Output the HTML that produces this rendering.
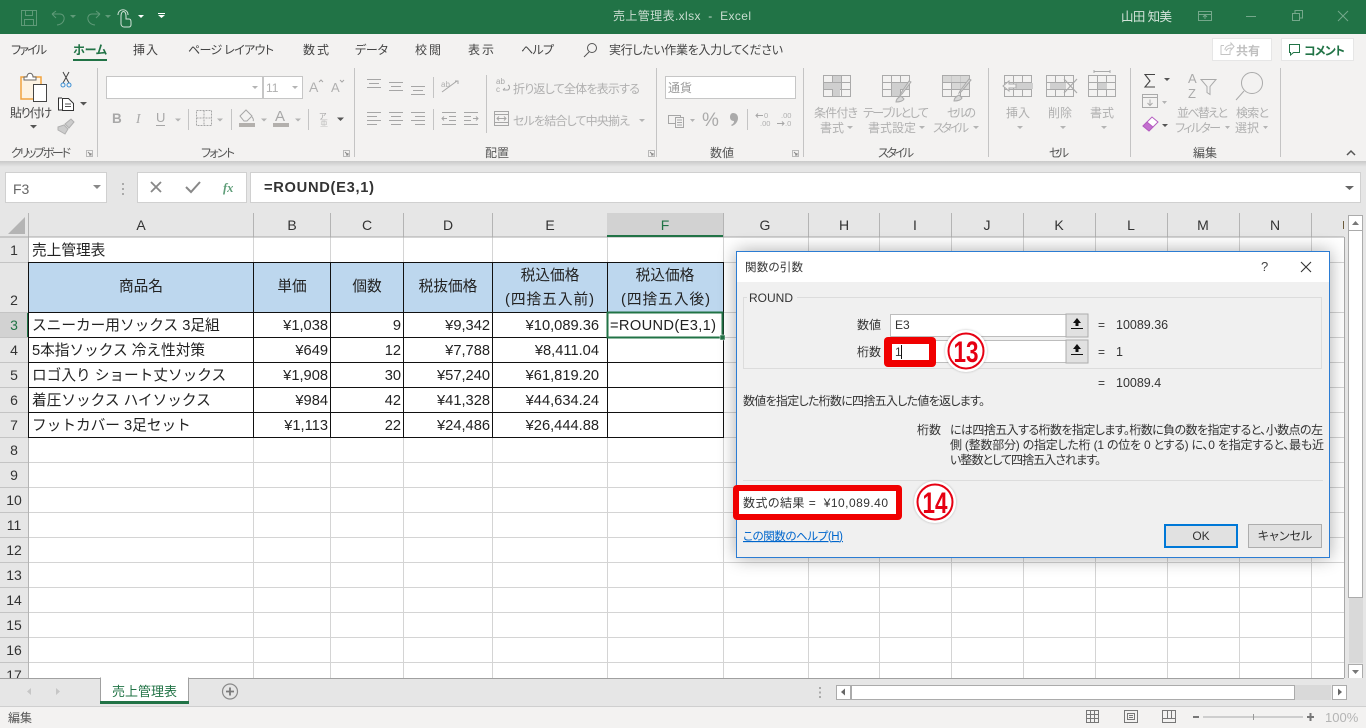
<!DOCTYPE html>
<html lang="ja"><head><meta charset="utf-8"><title>売上管理表.xlsx - Excel</title>
<style>
html,body{margin:0;padding:0;width:1366px;height:728px;overflow:hidden;background:#e6e6e6}
svg{display:block}
text{font-family:"Liberation Sans","Noto Sans CJK JP",sans-serif;fill:#333;white-space:pre}
.t{font-size:12px;fill:#444;font-feature-settings:"palt"}
.d{font-size:12px;fill:#b0b0b0;font-feature-settings:"palt"}
.c{font-size:14.67px;fill:#222}
.e{text-anchor:end}
.m{text-anchor:middle}
.h{font-size:14px;fill:#333;text-anchor:middle}
.g{font-size:12px;fill:#555;font-feature-settings:"palt"}
.dl{font-size:12px;fill:#333;font-feature-settings:"palt"}
.ic{fill:none;stroke:#a6a6a6;stroke-width:1}
.ar{fill:#b4b4b4}
.ad{fill:#555}
</style></head><body>
<svg width="1366" height="728" viewBox="0 0 1366 728" xmlns="http://www.w3.org/2000/svg">
<defs>
<linearGradient id="sh" x1="0" y1="0" x2="0" y2="1"><stop offset="0" stop-color="#c9c9c9"/><stop offset="1" stop-color="#e6e6e6"/></linearGradient>
<filter id="ds" x="-10%" y="-15%" width="120%" height="130%"><feGaussianBlur stdDeviation="9"/></filter>
<filter id="cs" x="-30%" y="-30%" width="160%" height="160%"><feGaussianBlur stdDeviation="1.2"/></filter>
</defs>
<rect width="1366" height="728" fill="#e6e6e6"/>

<!-- title bar -->
<rect width="1366" height="34" fill="#217346"/>
<g fill="none" stroke="#5f9a78" stroke-width="1">
<path d="M21.5 10.5h15v15h-15zM25.5 10.5v5h7v-5M24.5 25.5v-6h9v6"/>
<path d="M52 14l4-3M52 14l4 4M52 14h8c6 0 6 10-3 11"/>
<path d="M100 14l-4-3M100 14l-4 4M100 14h-8c-6 0-6 10 3 11"/>
</g>
<path d="M70 15h6l-3 3zM105 15h6l-3 3z" fill="#5f9a78"/>
<path d="M121 24v-8c0-6 5-6 5 0v3h3c2 0 2 2 2 3v3c0 1-1 2-2 2h-5c-2 0-3-2-3-3zM118 15c0-7 10-7 10 0" fill="none" stroke="#d3e3d9" stroke-width="1"/>
<path d="M138 15h6l-3 3z" fill="#fff"/>
<path d="M158 13h7v1h-7zM158 15h7l-3.500 3z" fill="#fff"/>
<text x="613" y="20" font-size="12" textLength="138" style="fill:#c9dcd0">売上管理表.xlsx  -  Excel</text>
<text x="1121" y="21" font-size="12.500" textLength="51" style="fill:#d3e3d9">山田 知美</text>
<g fill="none" stroke="#75a88b" stroke-width="1">
<path d="M1198.500 11.500h13v9h-13zM1198.500 14.500h13M1205 19v-3M1203 17l2-2 2 2"/>
<path d="M1246 16.500h10"/>
<path d="M1292.500 13.500h7v7h-7zM1295 13v-2.500h7.500v7.500h-3"/>
<path d="M1338 11l10 10M1348 11l-10 10"/>
</g>

<!-- ribbon -->
<rect y="34" width="1366" height="127" fill="#f3f2f1"/>
<rect y="161" width="1366" height="6" fill="url(#sh)"/>
<g class="tabs" font-size="12">
<text class="t" x="11" y="54" textLength="36">ファイル</text>
<text class="t" x="73" y="54" textLength="34" style="font-weight:700;fill:#217346">ホーム</text>
<text class="t" x="133" y="54" textLength="25">挿入</text>
<text class="t" x="188" y="54" textLength="86">ページ レイアウト</text>
<text class="t" x="303" y="54" textLength="26">数式</text>
<text class="t" x="355" y="54" textLength="33">データ</text>
<text class="t" x="415" y="54" textLength="26">校閲</text>
<text class="t" x="468" y="54" textLength="26">表示</text>
<text class="t" x="521" y="54" textLength="33">ヘルプ</text>
<text class="t" x="609" y="54" textLength="174">実行したい作業を入力してください</text>
</g>
<rect x="73" y="59" width="34" height="2" fill="#217346"/>
<circle cx="592" cy="48" r="4.500" fill="none" stroke="#555"/><path d="M589 52l-5 5" stroke="#555"/>
<rect x="1212.500" y="38.500" width="59" height="22" fill="#fff" stroke="#e6e6e6"/>
<path d="M1221 45.500h3M1221 45.500v9h9v-4M1225 50c0-3 3-5 6-5v-2l3 3.500-3 3.500v-2c-2 0-4 1-5 3" fill="none" stroke="#c4c4c4"/>
<text x="1236" y="55" font-size="12" style="font-weight:700;fill:#c0c0c0">共有</text>
<rect x="1281.500" y="38.500" width="72" height="22" fill="#fff" stroke="#e6e6e6"/>
<path d="M1289.500 44.500h10v8h-6l-3 2.500v-2.500h-1z" fill="none" stroke="#217346"/>
<text x="1304" y="55" font-size="12" textLength="41" style="font-weight:700;fill:#217346;font-feature-settings:'palt'">コメント</text>

<!-- group separators -->
<g fill="#c4c4c4">
<rect x="97" y="68" width="1" height="89"/><rect x="354" y="68" width="1" height="89"/><rect x="656" y="68" width="1" height="89"/><rect x="803" y="68" width="1" height="89"/><rect x="988" y="68" width="1" height="89"/><rect x="1130" y="68" width="1" height="89"/><rect x="1280" y="68" width="1" height="89"/>
<rect x="433" y="77" width="1" height="21"/><rect x="433" y="109" width="1" height="21"/><rect x="486" y="75" width="1" height="58"/>
<rect x="188" y="109" width="1" height="21"/><rect x="231" y="109" width="1" height="21"/><rect x="308" y="109" width="1" height="21"/><rect x="747" y="109" width="1" height="21"/>
</g>
<!-- clipboard -->
<rect x="21" y="77" width="20" height="22" fill="#fdf3e3" stroke="#f1a33f" stroke-width="1.500"/>
<path d="M24 80v-3h3c0-5 6-5 6 0h3v3z" fill="#fff" stroke="#666"/>
<rect x="33.500" y="84.500" width="13" height="17" fill="#fff" stroke="#444"/>
<text class="t" x="10" y="117" textLength="42">貼り付け</text>
<path class="ad" d="M30 125h7l-3.500 3.500z"/>
<path d="M63 72l6 11M69 72l-6 11" stroke="#444" fill="none"/><circle cx="63" cy="85" r="2" fill="none" stroke="#3b8fd4"/><circle cx="69" cy="85" r="2" fill="none" stroke="#3b8fd4"/>
<path d="M62 98h-3.500v12h4M62.500 98.500h6l5 5v7h-11z" fill="#fff" stroke="#333"/><path d="M65 104h6M65 106.500h6" stroke="#555"/>
<path class="ad" d="M80 102h7l-3.500 3.500z"/>
<path d="M58 127l6-2 4 4-3 5-7-4zM65 124l6-5 3 3-5 6z" fill="#ccc" stroke="#b0b0b0"/>
<text class="g" x="11" y="157" textLength="60">クリップボード</text>
<g id="lc"><path d="M86.500 150.500h6v6h-6z" fill="none" stroke="#b9b9b9"/><path d="M88 152l3 3M91 153v2h-2" stroke="#888" fill="none"/></g>

<!-- font -->
<rect x="106.500" y="76.500" width="156" height="22" fill="#fff" stroke="#c6c6c6"/>
<rect x="263.500" y="76.500" width="39" height="22" fill="#fff" stroke="#c6c6c6"/>
<path class="ar" d="M252 86h6l-3 3zM292 86h6l-3 3zM789 86h6l-3 3z"/>
<text class="d" x="266" y="92" font-size="13">11</text>
<text class="d" x="309" y="92" style="font-size:14px">A</text><path d="M319 82l2-2 2 2" class="ic"/>
<text class="d" x="331" y="92" style="font-size:13px">A</text><path d="M340 80l2 2 2-2" class="ic"/>
<text class="d" x="112" y="123" style="font-weight:700;font-size:13.500px;fill:#a8a8a8">B</text>
<text class="d" x="136" y="123" style="font-style:italic;font-size:13.500px;fill:#a8a8a8;font-family:'Liberation Serif',serif">I</text>
<text class="d" x="156" y="122" style="font-size:13px;fill:#a8a8a8">U</text><path d="M156 125.500h9" class="ic"/>
<path class="ar" d="M175 118.500h6l-3 3zM217 118.500h6l-3 3zM261 118.500h6l-3 3zM295 118.500h6l-3 3z"/>
<path class="ic" stroke-dasharray="2 1" d="M196.500 110.500h15v15h-15zM204 110.500v15M196.500 118h15"/>
<path class="ic" d="M240 116l6-6 6 6-5 5h-3zM252 117c1 1 2 3 1 4"/>
<rect x="239" y="123" width="16" height="4" fill="#b3b0ad"/>
<text class="d" x="275" y="121" style="font-size:15px;fill:#a8a8a8">A</text><rect x="273" y="123" width="16" height="4" fill="#b3b0ad"/>
<text class="d" x="319" y="119" style="font-size:8px;fill:#a8a8a8">ア</text><text class="d" x="320" y="126" style="font-size:8px;fill:#c0c0c0">亜</text>
<path class="ad" d="M337 117.500h7l-3.500 3.500z"/>
<text class="g" x="201" y="157" textLength="34">フォント</text>
<use href="#lc" x="257"/>

<!-- alignment -->
<g class="ic">
<path d="M367 79.500h14M369 83.500h10M367 87.500h14"/>
<path d="M389 82.500h14M391 86.500h10M389 90.500h14"/>
<path d="M411 86.500h14M413 90.500h10M411 94.500h14"/>
<path d="M367 112.500h14M367 116.500h10M367 120.500h14M367 124.500h10"/>
<path d="M389 112.500h14M391 116.500h10M389 120.500h14M391 124.500h10"/>
<path d="M411 112.500h14M415 116.500h10M411 120.500h14M415 124.500h10"/>
<path d="M442 92l15-11M455 81h3v3"/>
<path d="M442 112.500h14M449 116.500h7M449 120.500h7M442 124.500h14M447 118.500h-5M444 116.500l-2 2 2 2"/>
<path d="M464 112.500h14M464 116.500h7M464 120.500h7M464 124.500h14M473 118.500h5M476 116.500l2 2-2 2"/>
<rect x="494.500" y="111.500" width="14" height="14"/><path d="M494.500 114.500h14M494.500 122.500h14M497 118.500h9M499 116.500l-2 2 2 2M504 116.500l2 2-2 2"/>
</g>
<text x="441" y="87" style="font-size:8px;fill:#b0b0b0">ab</text>
<text x="496" y="84" style="font-size:8px;fill:#a8a8a8">ab</text><text x="496" y="92" style="font-size:8px;fill:#a8a8a8">c</text><path class="ic" d="M503 90h5c2-1 2-4 0-5M503 90l2-2"/>
<text class="d" x="513" y="93" textLength="127">折り返して全体を表示する</text>
<text class="d" x="513" y="125" textLength="117">セルを結合して中央揃え</text>
<path class="ar" d="M639 119h6l-3 3z"/>
<text class="g" x="485" y="157">配置</text>
<use href="#lc" x="562"/>

<!-- number -->
<rect x="665.500" y="76.500" width="130" height="22" fill="#fff" stroke="#c6c6c6"/>
<text class="d" x="668" y="92" style="fill:#999">通貨</text>
<g class="ic"><rect x="668.500" y="115.500" width="12" height="8"/><rect x="675.500" y="117.500" width="8" height="10" fill="#f3f2f1"/><path d="M677 120h5M677 122.500h5M677 125h5"/></g>
<path class="ar" d="M690 119h5l-2.500 3z"/>
<text x="702" y="126" style="font-size:19px;fill:#aaa">%</text>
<path d="M733 113c3 0 5 2 5 5 0 4-3 7-6 8l-1-1c2-1 3-2 3-4-3 0-4-2-4-4s1-4 3-4z" fill="#aaa"/>
<g style="font-size:7.500px"><text x="764" y="118" style="fill:#b0b0b0">0</text><text x="760" y="126" style="fill:#b0b0b0">.00</text><text x="781" y="118" style="fill:#b0b0b0">.00</text><text x="785" y="126" style="fill:#b0b0b0">.0</text></g>
<path class="ic" d="M756 115.500h7M758 113.500l-2 2 2 2M777 123.500h7M782 121.500l2 2-2 2"/>
<text class="g" x="710" y="157">数値</text>
<use href="#lc" x="706"/>

<!-- style group -->
<g class="ic" style="stroke:#aaa">
<rect x="823.500" y="75.500" width="27" height="21"/><path d="M823.500 82.500h27M823.500 89.500h27M832.500 75.500v21M841.500 75.500v21"/>
<rect x="882.500" y="75.500" width="27" height="21"/><path d="M882.500 82.500h27M882.500 89.500h27M891.500 75.500v21M900.500 75.500v21"/>
<rect x="942.500" y="75.500" width="27" height="21"/><path d="M942.500 82.500h27M942.500 89.500h27M951.500 75.500v21M960.500 75.500v21"/>
</g>
<path d="M833 76h8v6h-8zM824 83h17v6h-17zM833 89h7v7h-7z" fill="#cfcfcf"/>
<path d="M892 83h17v6h-17zM892 89h8v7h-8z" fill="#cfcfcf"/>
<path d="M943 76h26v6h-26zM952 83h17v6h-17z" fill="#cfcfcf" opacity=".8"/>
<path d="M911 82l-9 12-2 1 1-2 8-12zM896 102c0-3 3-5 5-6l3 3c-1 2-4 3-8 3zM971 80l-10 12-2 1 1-2 9-12zM954 101c0-3 3-5 5-6l3 3c-1 2-4 3-8 3z" fill="#d9d9d9" stroke="#aaa"/>
<text class="d" x="814" y="117" textLength="44">条件付き</text>
<text class="d" x="820" y="132" textLength="24">書式</text>
<text class="d" x="863" y="117" textLength="66">テーブルとして</text>
<text class="d" x="868" y="132" textLength="48">書式設定</text>
<text class="d" x="947" y="117" textLength="29">セルの</text>
<text class="d" x="933" y="132" textLength="36">スタイル</text>
<path class="ar" d="M847 126h6l-3 3zM919 126h6l-3 3zM973 126h6l-3 3zM1017 126h6l-3 3zM1060 126h6l-3 3zM1101 126h6l-3 3zM1162 101h5l-2.500 3zM1225 126h5l-2.500 3zM1263 126h5l-2.500 3z"/>
<text class="g" x="878" y="157" textLength="36">スタイル</text>

<!-- cells -->
<g class="ic" style="stroke:#aaa">
<rect x="1004.500" y="75.500" width="27" height="21"/><path d="M1004.500 82.500h27M1004.500 89.500h27M1013.500 75.500v21M1022.500 75.500v21"/>
<rect x="1046.500" y="75.500" width="27" height="21"/><path d="M1046.500 82.500h27M1046.500 89.500h27M1055.500 75.500v21M1064.500 75.500v21"/>
<rect x="1088.500" y="75.500" width="27" height="21"/><path d="M1088.500 82.500h27M1088.500 89.500h27M1097.500 75.500v21M1106.500 75.500v21M1094 71.500h16M1094 70v3M1110 70v3"/>
</g>
<path d="M1016 83h17v6h-17zM1050 83h16v6h-16zM1098 83h9v6h-9z" fill="#cfcfcf"/>
<path d="M1003 86l6-5v3h7v4h-7v3z" fill="#f3f2f1" stroke="#aaa"/>
<path d="M1064 79l13 14M1077 79l-13 14" stroke="#aaa" stroke-width="1.200"/>
<text class="d" x="1006" y="117">挿入</text>
<text class="d" x="1048" y="117">削除</text>
<text class="d" x="1090" y="117">書式</text>
<text class="g" x="1049" y="157" textLength="20">セル</text>

<!-- editing -->
<path d="M1155 74.500h-10l5 6.500-5 6h10" fill="none" stroke="#444" stroke-width="1.100"/>
<path class="ad" d="M1164 78h6l-3 3zM1162 124h6l-3 3z"/>
<rect x="1142.500" y="94.500" width="15" height="13" fill="none" stroke="#aaa"/><path d="M1142.500 97.500h15M1150 99.500v6M1147.500 103l2.500 2.500 2.500-2.500" fill="none" stroke="#aaa"/>
<path d="M1143 126l9-9 6 5-9 9z" fill="#fff" stroke="#b45cc0"/><path d="M1143 126l4-4 6 5-4 4z" fill="#c36fcf" stroke="#b45cc0"/>
<text x="1188" y="83" style="font-size:13px;fill:#aaa">A</text><text x="1188" y="98" style="font-size:13px;fill:#aaa">Z</text>
<path d="M1201 79.500h15l-6 7v8l-3-2v-6z" fill="none" stroke="#aaa"/>
<circle cx="1252" cy="83" r="10.500" fill="none" stroke="#aaa"/><path d="M1244 91l-8 9" stroke="#aaa"/>
<text class="d" x="1177" y="117" textLength="51">並べ替えと</text>
<text class="d" x="1175" y="132" textLength="46">フィルター</text>
<text class="d" x="1236" y="117" textLength="33">検索と</text>
<text class="d" x="1235" y="132" textLength="24">選択</text>
<text class="g" x="1193" y="157">編集</text>
<path d="M1347 155l4-4 4 4" fill="none" stroke="#555" stroke-width="1.500"/>

<!-- formula bar -->
<rect x="5.500" y="172.500" width="101" height="30" fill="#fff" stroke="#d0d0d0"/>
<text x="13" y="194" style="font-size:14px;fill:#666">F3</text>
<path d="M93 185h8l-4 4z" fill="#888"/>
<path d="M122 183h2v2h-2zM122 188h2v2h-2zM122 193h2v2h-2z" fill="#aaa"/>
<rect x="137.500" y="172.500" width="109" height="30" fill="#fff" stroke="#d0d0d0"/>
<path d="M151 182l10 10M161 182l-10 10" stroke="#888" stroke-width="1.800"/>
<path d="M186 187l5 5 9-10" stroke="#888" stroke-width="2" fill="none"/>
<text x="223" y="192" style="font-size:12.500px;font-style:italic;font-weight:700;fill:#5e9d78;font-family:'Liberation Serif',serif">fx</text>
<rect x="250.500" y="172.500" width="1110" height="30" fill="#fff" stroke="#d0d0d0"/>
<text x="264" y="192" textLength="110" style="font-size:14.670px;font-weight:700;fill:#333">=ROUND(E3,1)</text>
<path d="M1345 186h9l-4.500 4z" fill="#666"/>

<!-- sheet -->
<rect x="0" y="213" width="1344" height="24" fill="#e6e6e6"/>
<rect x="0" y="237" width="28" height="441" fill="#e6e6e6"/>
<rect x="28" y="237" width="1316" height="441" fill="#fff"/>
<path d="M25 217v17H8z" fill="#b4b4b4"/>
<!-- gridlines -->
<g stroke="#d4d4d4" stroke-width="1">
<path d="M253.500 237v441M330.500 237v441M403.500 237v441M492.500 237v441M607.500 237v441M723.500 237v441M808.500 237v441M879.500 237v441M951.500 237v441M1023.500 237v441M1095.500 237v441M1167.500 237v441M1239.500 237v441M1311.500 237v441"/>
<path d="M28 262.500h1316M28 312.500h1316M28 337.500h1316M28 362.500h1316M28 387.500h1316M28 412.500h1316M28 437.500h1316M28 462.500h1316M28 487.500h1316M28 512.500h1316M28 537.500h1316M28 562.500h1316M28 587.500h1316M28 612.500h1316M28 637.500h1316M28 662.500h1316"/>
</g>
<!-- header separators -->
<g stroke="#b4b4b4" stroke-width="1">
<path d="M28.500 213v465M253.500 213v24M330.500 213v24M403.500 213v24M492.500 213v24M607.500 213v24M723.500 213v24M808.500 213v24M879.500 213v24M951.500 213v24M1023.500 213v24M1095.500 213v24M1167.500 213v24M1239.500 213v24M1311.500 213v24"/>
<path d="M0 237h1344" stroke="#a8a8a8"/>
<path d="M0 262.500h28M0 312.500h28M0 337.500h28M0 362.500h28M0 387.500h28M0 412.500h28M0 437.500h28M0 462.500h28M0 487.500h28M0 512.500h28M0 537.500h28M0 562.500h28M0 587.500h28M0 612.500h28M0 637.500h28M0 662.500h28" stroke="#c4c4c4"/>
</g>
<rect x="607" y="213" width="116" height="24" fill="#d2d2d2"/>
<rect x="607" y="235" width="116" height="2" fill="#217346"/>
<rect x="0" y="313" width="28" height="24" fill="#d2d2d2"/>
<rect x="27" y="313" width="2" height="24" fill="#217346"/>
<rect x="1343" y="221" width="1" height="8" fill="#6b5a3a"/>
<text class="h" x="141" y="230">A</text><text class="h" x="292" y="230">B</text><text class="h" x="367" y="230">C</text><text class="h" x="448" y="230">D</text><text class="h" x="550" y="230">E</text><text class="h" x="665" y="230" style="fill:#217346">F</text><text class="h" x="765" y="230">G</text><text class="h" x="844" y="230">H</text><text class="h" x="915" y="230">I</text><text class="h" x="987" y="230">J</text><text class="h" x="1059" y="230">K</text><text class="h" x="1131" y="230">L</text><text class="h" x="1203" y="230">M</text><text class="h" x="1275" y="230">N</text>
<text class="h" x="14" y="255">1</text><text class="h" x="14" y="305">2</text><text class="h" x="14" y="330" style="fill:#217346">3</text><text class="h" x="14" y="355">4</text><text class="h" x="14" y="380">5</text><text class="h" x="14" y="405">6</text><text class="h" x="14" y="430">7</text><text class="h" x="14" y="455">8</text><text class="h" x="14" y="480">9</text><text class="h" x="14" y="505">10</text><text class="h" x="14" y="530">11</text><text class="h" x="14" y="555">12</text><text class="h" x="14" y="580">13</text><text class="h" x="14" y="605">14</text><text class="h" x="14" y="630">15</text><text class="h" x="14" y="655">16</text><text class="h" x="14" y="680">17</text>

<!-- table -->
<rect x="29" y="263" width="694" height="49" fill="#bdd7ee"/>
<g stroke="#111" stroke-width="1" fill="none">
<path d="M28.500 262.500h695M28.500 312.500h695M28.500 337.500h695M28.500 362.500h695M28.500 387.500h695M28.500 412.500h695M28.500 437.500h695"/>
<path d="M253.500 262v176M330.500 262v176M403.500 262v176M492.500 262v176M607.500 262v176M723.500 262v176M28.500 262v176"/>
</g>
<text class="c" x="32" y="255">売上管理表</text>
<text class="c m" x="141" y="291">商品名</text><text class="c m" x="292" y="291">単価</text><text class="c m" x="367" y="291">個数</text><text class="c m" x="448" y="291">税抜価格</text>
<text class="c m" x="550" y="280">税込価格</text><text class="c" x="505" y="304" textLength="89">(四捨五入前)</text>
<text class="c m" x="665" y="280">税込価格</text><text class="c" x="621" y="304" textLength="89">(四捨五入後)</text>
<text class="c" x="32" y="330">スニーカー用ソックス 3足組</text>
<text class="c" x="32" y="355">5本指ソックス 冷え性対策</text>
<text class="c" x="32" y="380">ロゴ入り ショート丈ソックス</text>
<text class="c" x="32" y="405">着圧ソックス ハイソックス</text>
<text class="c" x="32" y="430">フットカバー 3足セット</text>
<text class="c e" x="328" y="330">¥1,038</text><text class="c e" x="401" y="330">9</text><text class="c e" x="490" y="330">¥9,342</text><text class="c e" x="599" y="330">¥10,089.36</text>
<text class="c e" x="328" y="355">¥649</text><text class="c e" x="401" y="355">12</text><text class="c e" x="490" y="355">¥7,788</text><text class="c e" x="599" y="355">¥8,411.04</text>
<text class="c e" x="328" y="380">¥1,908</text><text class="c e" x="401" y="380">30</text><text class="c e" x="490" y="380">¥57,240</text><text class="c e" x="599" y="380">¥61,819.20</text>
<text class="c e" x="328" y="405">¥984</text><text class="c e" x="401" y="405">42</text><text class="c e" x="490" y="405">¥41,328</text><text class="c e" x="599" y="405">¥44,634.24</text>
<text class="c e" x="328" y="430">¥1,113</text><text class="c e" x="401" y="430">22</text><text class="c e" x="490" y="430">¥24,486</text><text class="c e" x="599" y="430">¥26,444.88</text>
<text class="c" x="610" y="330" textLength="106">=ROUND(E3,1)</text>
<rect x="607.500" y="312.500" width="115" height="25" fill="none" stroke="#217346" stroke-width="2"/>
<rect x="720" y="335" width="5" height="5" fill="#217346" stroke="#fff" stroke-width=".5"/>

<!-- sheet frame and scrollbars -->
<rect x="1344" y="213" width="22" height="493" fill="#e6e6e6"/>
<path d="M1344.500 237v442" stroke="#a8a8a8"/>
<rect x="1348.500" y="215.500" width="14" height="15" fill="#fff" stroke="#ababab"/>
<path d="M1352 225h7l-3.500-4z" fill="#777"/>
<rect x="1349" y="231" width="14" height="432" fill="#d9d9d9"/>
<rect x="1348.500" y="230.500" width="14" height="367" fill="#fff" stroke="#ababab"/>
<rect x="1348.500" y="664.500" width="14" height="14" fill="#fff" stroke="#ababab"/>
<path d="M1352 670h7l-3.500 4z" fill="#777"/>

<!-- sheet tabs -->
<rect x="0" y="678" width="1366" height="28" fill="#e6e6e6"/>
<path d="M0 678.500h1344" stroke="#a0a0a0"/>
<rect x="100.500" y="678" width="88" height="25" fill="#fff" stroke="#a0a0a0"/>
<rect x="100" y="701" width="89" height="3" fill="#217346"/>
<rect x="101" y="677" width="87" height="2" fill="#fff"/>
<text x="112" y="696" font-size="13" style="fill:#217346">売上管理表</text>
<circle cx="230" cy="691.500" r="7.500" fill="none" stroke="#8a8a8a" stroke-width="1.200"/>
<path d="M226 691.500h8M230 687.500v8" stroke="#7a7a7a" stroke-width="1.800"/>
<path d="M31 688v7l-4-3.500zM56 688v7l4-3.500z" fill="#c6c6c6"/>
<path d="M819 687h2v2h-2zM819 691.500h2v2h-2zM819 696h2v2h-2z" fill="#aaa"/>
<rect x="836.500" y="685.500" width="14" height="14" fill="#fff" stroke="#ababab"/><path d="M845 688.500v7l-4-3.500z" fill="#666"/>
<rect x="851" y="685" width="480" height="15" fill="#d9d9d9"/>
<rect x="851.500" y="685.500" width="443" height="14" fill="#fff" stroke="#ababab"/>
<rect x="1332.500" y="685.500" width="14" height="14" fill="#fff" stroke="#ababab"/><path d="M1338 688.500v7l4-3.500z" fill="#666"/>

<!-- status bar -->
<rect x="0" y="706" width="1366" height="22" fill="#f3f2f1"/>
<path d="M0 706.500h1366" stroke="#cfcfcf"/>
<text x="8" y="722" font-size="12" style="fill:#555">編集</text>
<g fill="none" stroke="#777">
<path d="M1086.500 710.500h12v12h-12zM1090.500 710.500v12M1094.500 710.500v12M1086.500 714.500h12M1086.500 718.500h12"/>
<path d="M1124.500 710.500h13v12h-13zM1127.500 713.500h7v6h-7zM1129 715.500h4M1129 717.500h4"/>
<path d="M1162.500 710.500h13v12h-13zM1162.500 718.500h13M1167.500 710.500v8M1171.500 710.500v8"/>
</g>
<path d="M1193 716h6v2h-6zM1307 716h7v2h-7zM1309.500 713h2v8h-2z" fill="#777"/>
<rect x="1203" y="716.500" width="100" height="1" fill="#aaa"/><rect x="1253" y="714" width="1" height="6" fill="#999"/>
<text x="1325" y="722" style="font-size:13px;fill:#b4b4b4">100%</text>

<!-- dialog -->
<rect x="736" y="251" width="594" height="307" fill="#000" opacity=".33" filter="url(#ds)"/>
<rect x="736.500" y="251.500" width="593" height="306" fill="#f0f0f0" stroke="#2b7cd3"/>
<rect x="737" y="252" width="592" height="30" fill="#fff"/>
<text class="dl" x="745" y="271" textLength="58" style="font-size:11.500px">関数の引数</text>
<text x="1261" y="271" style="font-size:13px;fill:#444">?</text>
<path d="M1301 262l10 10M1311 262l-10 10" stroke="#333" stroke-width="1.100"/>
<rect x="743.500" y="297.500" width="578" height="71" fill="none" stroke="#dcdcdc"/>
<rect x="747" y="292" width="50" height="12" fill="#f0f0f0"/>
<text class="dl" x="749" y="302" textLength="44">ROUND</text>
<text class="dl" x="857" y="329" textLength="24">数値</text>
<text class="dl" x="857" y="356" textLength="24">桁数</text>
<rect x="890.500" y="314.500" width="176" height="22" fill="#fff" stroke="#bdbdbd"/>
<rect x="1066" y="314" width="22" height="23" fill="#e1e1e1" stroke="#adadad"/>
<rect x="890.500" y="340.500" width="176" height="22" fill="#fff" stroke="#bdbdbd"/>
<rect x="1066" y="340" width="22" height="23" fill="#e1e1e1" stroke="#adadad"/>
<path d="M1077 318l-4 5h2.500v3h3v-3h2.500zM1071 328h12v1h-12zM1077 344l-4 5h2.500v3h3v-3h2.500zM1071 354h12v1h-12z" fill="#111"/>
<text class="dl" x="895" y="329">E3</text>
<text class="dl" x="1098" y="329">=</text><text class="dl" x="1116" y="329" style="font-size:12.500px">10089.36</text>
<text class="dl" x="1098" y="356">=</text><text class="dl" x="1116" y="356" style="font-size:12.500px">1</text>
<text class="dl" x="1098" y="387">=</text><text class="dl" x="1116" y="387" style="font-size:12.500px">10089.4</text>
<text class="dl" x="743" y="405" textLength="242">数値を指定した桁数に四捨五入した値を返します。</text>
<text class="dl" x="917" y="434" textLength="24">桁数</text>
<text class="dl" x="950" y="434" textLength="373">には四捨五入する桁数を指定します。桁数に負の数を指定すると、小数点の左</text>
<text class="dl" x="950" y="449" textLength="374">側 (整数部分) の指定した桁 (1 の位を 0 とする) に、0 を指定すると、最も近</text>
<text class="dl" x="950" y="464" textLength="151">い整数として四捨五入されます。</text>
<rect x="743" y="480" width="580" height="1" fill="#dcdcdc"/>
<!-- callouts -->
<rect x="884" y="337" width="52" height="30" rx="4" fill="#f00000"/>
<rect x="892" y="344" width="37" height="16" fill="#fff"/>
<text class="dl" x="895" y="356">1</text><rect x="901" y="345" width="1" height="14" fill="#111"/>
<rect x="733" y="485" width="169" height="35" rx="4" fill="#f00000"/>
<rect x="739" y="491" width="157" height="23" fill="#fff"/>
<text class="dl" x="743" y="507" textLength="145">数式の結果 =  ¥10,089.40</text>
<circle cx="966" cy="351" r="21" fill="#000" opacity=".25" filter="url(#cs)"/>
<circle cx="966" cy="351" r="19.500" fill="#fff" stroke="#fff" stroke-width="3"/>
<circle cx="966" cy="351" r="17.500" fill="#fff" stroke="#e60012" stroke-width="2"/>
<text x="966" y="362" text-anchor="middle" textLength="25" lengthAdjust="spacingAndGlyphs" style="font-size:30px;font-weight:700;fill:#e60012">13</text>
<circle cx="935" cy="502" r="21" fill="#000" opacity=".25" filter="url(#cs)"/>
<circle cx="935" cy="502" r="19.500" fill="#fff" stroke="#fff" stroke-width="3"/>
<circle cx="935" cy="502" r="17.500" fill="#fff" stroke="#e60012" stroke-width="2"/>
<text x="935" y="513" text-anchor="middle" textLength="25" lengthAdjust="spacingAndGlyphs" style="font-size:30px;font-weight:700;fill:#e60012">14</text>
<text x="743" y="540" textLength="100" text-decoration="underline" style="font-size:11.500px;fill:#0066cc;font-feature-settings:'palt'">この関数のヘルプ(H)</text>
<rect x="1165" y="525" width="72" height="22" fill="#e1e1e1" stroke="#0078d7" stroke-width="2"/>
<text class="dl m" x="1201" y="540">OK</text>
<rect x="1248.500" y="524.500" width="73" height="23" fill="#e1e1e1" stroke="#adadad"/>
<text class="dl m" x="1285" y="540">キャンセル</text>
</svg>
</body></html>
